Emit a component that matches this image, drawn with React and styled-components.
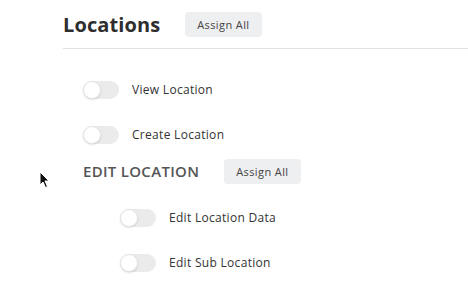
import React from 'react';
import styled, { createGlobalStyle } from 'styled-components';

const GlobalStyle = createGlobalStyle`
  html, body {
    margin: 0;
    padding: 0;
    background: #ffffff;
  }
  body {
    font-family: 'Open Sans', 'DejaVu Sans', sans-serif;
    color: #333;
    overflow: hidden;
  }
`;

const StyledPage = styled.div`
  position: relative;
  width: 468px;
  height: 286px;
  padding-left: 63px;
  box-sizing: border-box;
`;

const StyledHeader = styled.div`
  display: flex;
  align-items: center;
  gap: 25px;
  height: 48px;
  border-bottom: 1px solid #e2e2e2;
  h2 {
    margin: 0;
    font-size: 20px;
    font-weight: 700;
    color: #2e2e2e;
    letter-spacing: 0.1px;
  }
`;

const Button = styled.button`
  height: 25px;
  padding: 0 12px;
  border: none;
  border-radius: 4px;
  background: #eeeff1;
  color: #444;
  font-family: 'Open Sans', sans-serif;
  font-size: 11px;
  letter-spacing: 0.4px;
  cursor: pointer;
`;

const StyledList = styled.div`
  display: flex;
  flex-direction: column;
  padding-left: ${({ $indent }) => $indent}px;
`;

const StyledRow = styled.label`
  display: flex;
  align-items: center;
  gap: 13px;
  height: 45px;
  font-size: 12px;
  color: #333;
  letter-spacing: 0.3px;
`;

const StyledSection = styled.div`
  display: flex;
  align-items: center;
  gap: 25px;
  height: 28px;
  margin: 0 0 10px;
  h3 {
    margin: 0;
    font-size: 15px;
    font-weight: 600;
    color: #555;
    letter-spacing: 0.3px;
  }
`;

const StyledToggle = styled.span`
  position: relative;
  display: inline-block;
  width: 36px;
  height: 18px;
  border-radius: 9px;
  background: ${({ $on }) => ($on ? '#4a90e2' : '#ebebeb')};
  &::after {
    content: '';
    position: absolute;
    top: 0;
    left: ${({ $on }) => ($on ? '18px' : '0')};
    width: 18px;
    height: 18px;
    box-sizing: border-box;
    border-radius: 50%;
    background: #fff;
    border: 1px solid #e4e4e4;
    box-shadow: 0 1px 2px rgba(0, 0, 0, 0.12);
  }
`;

const StyledCursor = styled.svg`
  position: absolute;
  left: 39px;
  top: 171px;
`;

function Toggle({ label }) {
  return (
    <StyledRow>
      <StyledToggle />
      {label}
    </StyledRow>
  );
}

export default function App() {
  return (
    <StyledPage>
      <GlobalStyle />
      <StyledHeader>
        <h2>Locations</h2>
        <Button>Assign All</Button>
      </StyledHeader>
      <StyledList $indent={20} style={{ paddingTop: 18 }}>
        <Toggle label="View Location" />
        <Toggle label="Create Location" />
        <StyledSection>
          <h3>EDIT LOCATION</h3>
          <Button>Assign All</Button>
        </StyledSection>
        <StyledList $indent={37}>
          <Toggle label="Edit Location Data" />
          <Toggle label="Edit Sub Location" />
        </StyledList>
      </StyledList>
      <StyledCursor width="12" height="18" viewBox="0 0 12 18">
        <path d="M1 1 L1 14 L4 11 L6.5 16.5 L8.5 15.5 L6 10 L10 10 Z" fill="#111" stroke="#fff" strokeWidth="1" />
      </StyledCursor>
    </StyledPage>
  );
}
